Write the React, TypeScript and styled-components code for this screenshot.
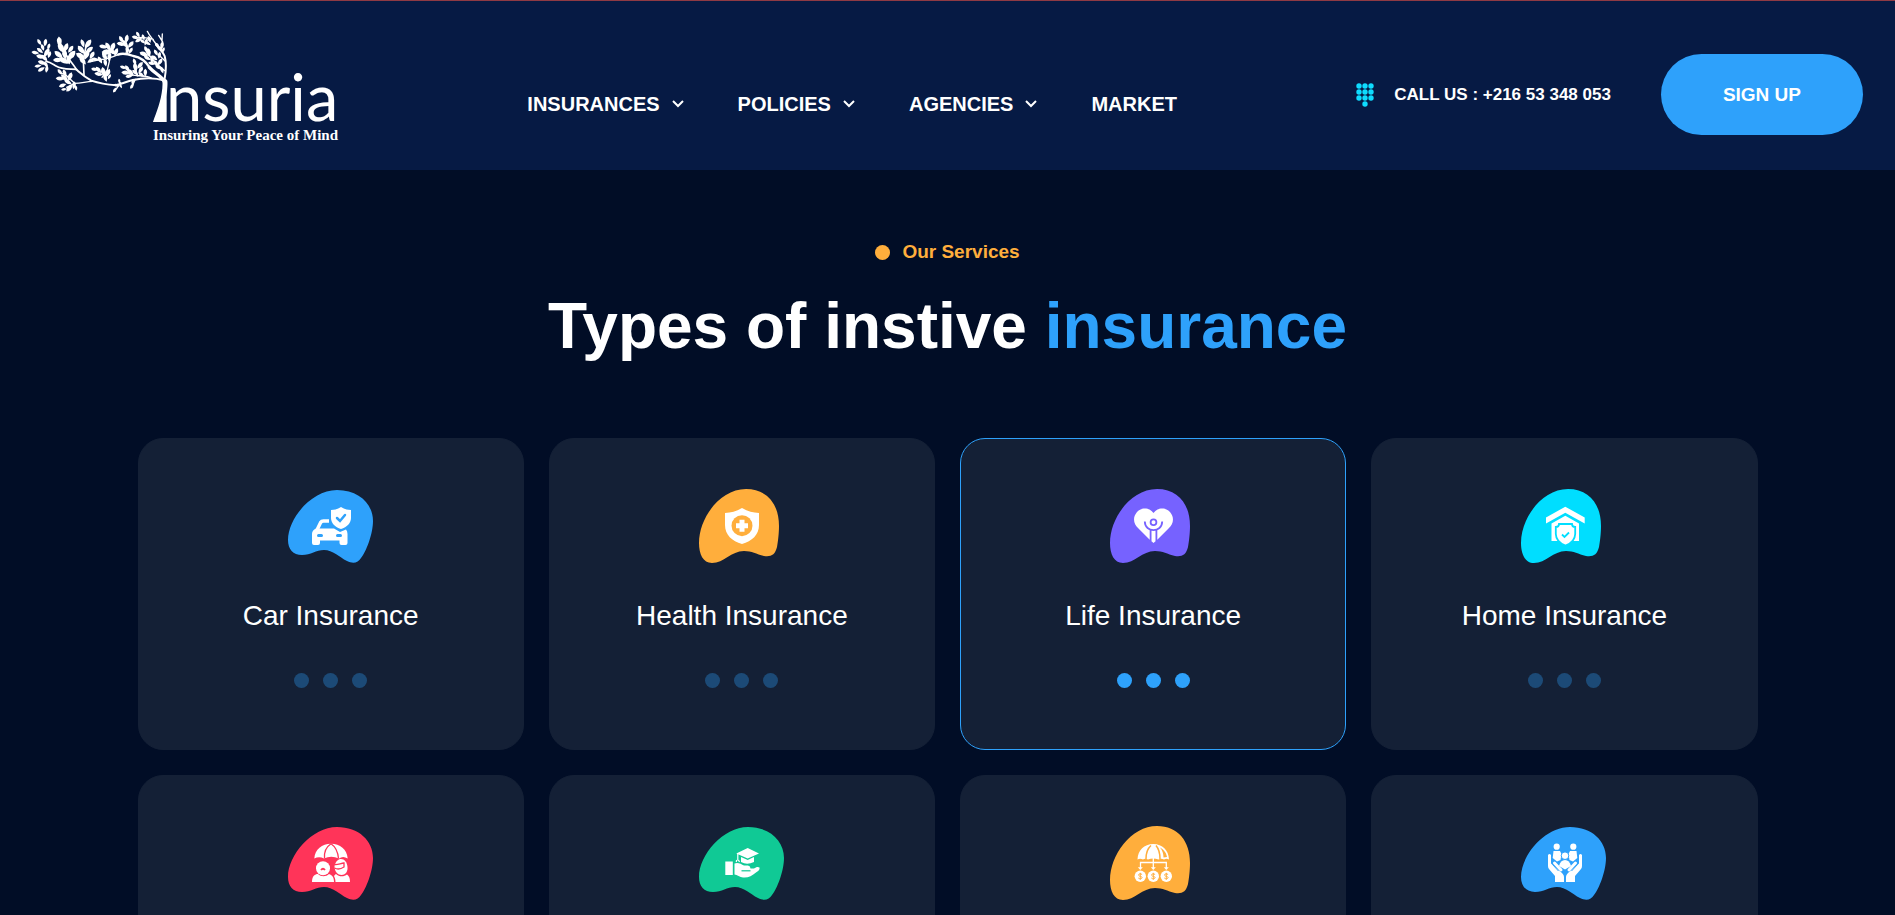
import React from "react";
import styled, { createGlobalStyle } from "styled-components";

const GlobalStyle = createGlobalStyle`
  *, *::before, *::after { box-sizing: border-box; }
  body {
    margin: 0;
    background: #010d26;
    color: #fff;
    font-family: "Liberation Sans", Arial, sans-serif;
  }
`;

const Page = styled.div`
  height: 100vh;
  overflow: hidden;
`;

const Header = styled.header`
  display: grid;
  grid-template-columns: auto 1fr auto;
  align-items: center;
  min-height: 170px;
  padding: 0 32px;
  border-top: 1px solid #8f3a44;
  background: #061a44;
`;

const LogoLink = styled.a`
  display: block;
  color: #fff;
`;

const LogoSvg = styled.svg`
  display: block;
  width: 304px;
  height: 119px;
  overflow: visible;
`;

const LogoName = styled.text`
  font: 400 65px Lato, "Liberation Sans", sans-serif;
`;

const LogoTagline = styled.text`
  font: 700 15px "Liberation Serif", "Times New Roman", serif;
`;

const Nav = styled.nav`
  display: flex;
  justify-content: center;
  gap: 54px;
  padding: 12px 0 0 12px;
  margin-top: 24px;
`;

const NavLink = styled.a`
  display: flex;
  align-items: center;
  gap: 12px;
  color: #fff;
  font-size: 20px;
  font-weight: 700;
  line-height: 24px;
  text-decoration: none;
`;

const Chevron = styled.svg`
  width: 12px;
  height: 24px;
`;

const Actions = styled.div`
  display: flex;
  align-items: center;
  gap: 50px;
  margin-top: 18px;
`;

const PhoneLink = styled.a`
  display: flex;
  align-items: center;
  gap: 20px;
  color: #fff;
  font-size: 17px;
  font-weight: 700;
  line-height: 24px;
  text-decoration: none;
`;

const SignUp = styled.button`
  height: 81px;
  padding: 0 62px;
  border: 0;
  border-radius: 41px;
  background: #2ea1fb;
  color: #fff;
  font: 700 19px/24px "Liberation Sans", Arial, sans-serif;
  cursor: pointer;
`;

const Services = styled.main`
  max-width: 1620px;
  margin: 0 auto;
  padding: 68px 0 60px;
`;

const Label = styled.p`
  display: flex;
  align-items: center;
  justify-content: center;
  gap: 12px;
  margin: 0;
  color: #ffae3c;
  font-size: 19px;
  font-weight: 700;
  line-height: 28px;
`;

const Title = styled.h1`
  margin: 22px 0 74px;
  font-size: 64px;
  font-weight: 700;
  line-height: 76px;
  text-align: center;
`;

const Accent = styled.span`
  color: #2ea1fb;
`;

const Grid = styled.div`
  display: grid;
  grid-template-columns: repeat(4, 1fr);
  gap: 25px;
`;

const Card = styled.article<{ $active?: boolean }>`
  display: flex;
  flex-direction: column;
  align-items: center;
  min-height: 312px;
  padding: 49px 20px;
  border: 1px solid ${(p) => (p.$active ? "#2ea1fb" : "#142036")};
  border-radius: 25px;
  background: #142036;
`;

const CardIcon = styled.svg`
  width: 88px;
  height: 76px;
`;

const CardTitle = styled.h2`
  margin: 34px 0 39px;
  font-size: 28px;
  font-weight: 400;
  line-height: 36px;
`;

const Dots = styled.div<{ $active?: boolean }>`
  display: flex;
  gap: 14px;
  opacity: ${(p) => (p.$active ? 1 : 0.33)};
`;

const Dot = styled.span<{ $color: string }>`
  width: 15px;
  height: 15px;
  border-radius: 50%;
  background: ${(p) => p.$color};
`;

/* Each leaf: x and y of its centre, direction in degrees, length. */
const leaves: number[][] = [
  [58, 66, 60, 20], [76, 68, 100, 22], [68, 82, 70, 20], [86, 80, 110, 18], [46, 98, 10, 22],
  [60, 92, 40, 22], [80, 98, 120, 28], [62, 110, 10, 26], [74, 114, 50, 24], [88, 104, 110, 20],
  [54, 138, -10, 20], [66, 128, 20, 24], [64, 148, -30, 22], [80, 148, 100, 20], [78, 134, 60, 20],
  [118, 66, 85, 30], [124, 84, 60, 34], [138, 82, 110, 26], [152, 88, 125, 24], [116, 104, 40, 30],
  [134, 102, 80, 30], [154, 106, 130, 34], [114, 120, 0, 28], [132, 122, 30, 32], [146, 120, 80, 26],
  [188, 70, 70, 24], [204, 72, 125, 30], [184, 90, 50, 30], [208, 90, 140, 26], [182, 108, 30, 30],
  [200, 104, 110, 30], [188, 122, 50, 28], [216, 106, 120, 24], [212, 122, 150, 22],
  [226, 118, 10, 22], [240, 120, 60, 22], [254, 108, 60, 26], [268, 110, 100, 24], [256, 128, 80, 22],
  [250, 80, 10, 24], [264, 80, 60, 26], [278, 82, 110, 28], [262, 96, 0, 32], [288, 96, 110, 24], [276, 94, 40, 28],
  [304, 58, 60, 22], [320, 56, 100, 24], [304, 72, 10, 26], [316, 72, 60, 26], [332, 74, 130, 24], [322, 90, 80, 22], [332, 92, 120, 20],
  [346, 52, 10, 20], [354, 44, 60, 18], [356, 60, -30, 22], [370, 52, 70, 18], [378, 66, 110, 20], [368, 64, 40, 18], [388, 58, 70, 20], [384, 70, 30, 18],
  [378, 88, 70, 20], [372, 102, 20, 26], [386, 98, 80, 26], [382, 114, 30, 22], [396, 118, 90, 22],
  [408, 98, 60, 20], [418, 106, 100, 20], [396, 130, 10, 22], [408, 130, 50, 22], [420, 126, 120, 22], [416, 142, 30, 22], [426, 150, 70, 20], [404, 114, 40, 20],
  [412, 76, 50, 18], [426, 76, 100, 22], [420, 86, 40, 22], [430, 90, 110, 16],
  [310, 142, 20, 20], [322, 146, 60, 22], [318, 158, 5, 26], [332, 158, 50, 26], [344, 126, 70, 20], [346, 142, 80, 26], [360, 136, 130, 24], [362, 150, 120, 22], [346, 158, 40, 22], [328, 168, -10, 22], [376, 158, 90, 22], [364, 164, 40, 20],
  [224, 148, 10, 20], [236, 150, 50, 24], [236, 162, 10, 24], [250, 156, 80, 28], [262, 160, 120, 28], [256, 174, 70, 22], [268, 170, 120, 16],
  [120, 156, 50, 20], [134, 160, 70, 22], [120, 176, 5, 24], [134, 174, 40, 26], [150, 170, 110, 26], [128, 196, -20, 22], [144, 186, 30, 24], [148, 204, -50, 26], [162, 196, 100, 22], [168, 204, 80, 16], [132, 208, -10, 16],
  [298, 184, 80, 14], [290, 196, 20, 16], [284, 210, -60, 16], [302, 198, 60, 14], [338, 186, 100, 16], [336, 198, -60, 18],
];

function Leaf({ x, y, angle, len }: { x: number; y: number; angle: number; len: number }) {
  const h = len * 0.54;
  const w = len * 0.33;
  return (
    <path
      d={`M${-h} 0Q${-h / 4} ${-w * 1.5} ${h} 0Q${-h / 4} ${w * 1.5} ${-h} 0Z`}
      transform={`translate(${x} ${y}) rotate(${angle})`}
    />
  );
}

function Logo() {
  return (
    <LogoSvg viewBox="0 0 304 119" fill="currentColor" role="img" aria-label="Insuria">
      <g transform="translate(-12 -6) scale(.3333)">
        {leaves.map(([x, y, angle, len]) => (
          <Leaf key={`${x}-${y}`} x={x} y={y} angle={angle} len={len} />
        ))}
        <path d="M416 176C430 180 428 188 427 205C423 245 410 275 399 306H440V240C440 215 444 195 442 182C438 174 424 172 416 176Z" />
        <g fill="none" stroke="currentColor" strokeLinecap="round">
          <path strokeWidth="10" d="M436 186C424 168 404 160 388 142" />
          <path strokeWidth="7" d="M390 144C378 124 364 112 340 108C324 102 308 98 294 104" />
          <path strokeWidth="4" d="M296 103C276 112 262 118 240 119L216 124M270 116L262 150L246 172M318 102L322 78" />
          <path strokeWidth="6" d="M434 182C404 172 366 174 338 180C320 184 306 192 286 196" />
          <path strokeWidth="6" d="M288 196C262 194 232 188 214 182C192 170 180 158 168 148" />
          <path strokeWidth="5" d="M170 148C150 146 126 150 108 138C98 132 92 126 78 124M192 164L190 118L198 80M168 146C156 128 142 112 128 90" />
          <path strokeWidth="4" d="M218 184C198 184 186 190 164 190L136 164L124 160M164 190L140 202M302 188L284 214M346 178L336 200M394 174C374 164 352 170 334 164M352 168L344 134" />
          <path strokeWidth="6" d="M434 176C438 154 440 130 434 108C428 92 416 86 408 74" />
          <path strokeWidth="4" d="M410 76C402 60 390 52 382 34M400 58L370 52L348 54M424 90L428 66L416 46M426 64L427 42M434 152L404 126L380 96M436 124L416 104" />
        </g>
      </g>
      <LogoName x="134" y="95">nsuria</LogoName>
      <LogoTagline x="121" y="114">Insuring Your Peace of Mind</LogoTagline>
    </LogoSvg>
  );
}

function Keypad() {
  return (
    <svg width="18" height="24" viewBox="0 0 18 24" fill="#0edcff" aria-hidden="true">
      {[3, 9, 15].map((y) => [3, 9, 15].map((x) => <circle key={`${x}-${y}`} cx={x} cy={y} r="2.7" />))}
      <circle cx="9" cy="21" r="2.7" />
    </svg>
  );
}

const BLOB_LOW =
  "M1 52C1 30 25 2 50 2C72 2 86 16 86 33C86 46 79 64 74 70C71 75 66 76 60 73C52 69 46 62 37 62C29 62 24 67 15 67C6 67 1 61 1 52Z";
const BLOB_TALL =
  "M1 55C1 30 22 1 48 1C69 1 81 16 81 38C81 45 80 54 79 59C77 67 73 69 66 68C58 66 54 63 46 63C33 63 26 75 14 75C5 75 1 66 1 55Z";

type Glyph = (props: { bg: string }) => React.ReactElement;

const CarGlyph: Glyph = ({ bg }) => (
  <>
    <path d="M30 42L33.600 34.500Q34.500 33 36.500 33H42" fill="none" stroke="#fff" strokeWidth="3.500" />
    <path d="M29 40.500H47L53 44L59 41.500Q60.500 43 60.500 46V55Q60.500 57 58.500 57H54.500Q52.500 57 52.500 55V52.500H33V55Q33 57 31 57H27Q25 57 25 55V46Q25 42 29 40.500Z" />
    <path d="M54 19C51 21 48 22 44 22V30C44 35 48 39 54 41C60 39 64 35 64 30V22C60 22 57 21 54 19Z" />
    <path d="M50 30L53 33L58 27" fill="none" stroke={bg} strokeWidth="2.500" strokeLinecap="round" />
    <path d="M31.500 47.500H34.500M50.500 47.500H53.500" stroke={bg} strokeWidth="3" strokeLinecap="round" />
  </>
);

const HealthGlyph: Glyph = ({ bg }) => (
  <>
    <path d="M44 20C38 23.500 33 24.500 27 25V37C27 47 34 53 44 56C54 53 61 47 61 37V25C55 24.500 50 23.500 44 20Z" />
    <circle cx="44" cy="37.700" r="10.500" fill={bg} />
    <path d="M41.500 31.700H46.500V35.200H50V40.200H46.500V43.700H41.500V40.200H38V35.200H41.500Z" />
  </>
);

const LifeGlyph: Glyph = ({ bg }) => (
  <>
    <path d="M44.500 25C40 19 32 19.500 28 24C23 30 25 36 29 40L40 51L44.500 55L49 51L60 40C64 36 66 30 61 24C57 19.500 49 19 44.500 25Z" />
    <g fill="none" stroke={bg} strokeWidth="1.800">
      <circle cx="44.500" cy="34.300" r="2.900" />
      <path d="M35.800 33.500C36 45 53 45 53.200 33.500M41.600 41.500V53M47.400 41.500V53" />
    </g>
  </>
);

const HomeGlyph: Glyph = ({ bg }) => (
  <>
    <path d="M45.300 18.700L26 29.500V35.500L45.300 24.700L64.700 35.500V29.500Z" />
    <path d="M45.300 27.700L31.500 35.500V53H59V35.500Z" />
    <path
      d="M39 36H52Q52 39 55.200 39V46C55 52 51 55.500 45.500 57.500C40 55.500 36 52 35.800 46V39Q39 39 39 36Z"
      stroke={bg}
      strokeWidth="1.800"
    />
    <path d="M42 46.500L44.500 49L49 44.500" fill="none" stroke={bg} strokeWidth="1.800" />
  </>
);

const FamilyGlyph: Glyph = ({ bg }) => (
  <>
    <path d="M27.300 33.500C28 24 35 19 44 18.700C53 19 60 24 60.700 33.500Q56 30.500 52 33.500Q44 30 37 33.500Q32 31 27.300 33.500Z" />
    <path d="M44 18.700C39 22 37 28 37.500 33.500M44 18.700C49 22 51 28 51.500 33.500" fill="none" stroke={bg} strokeWidth="1.300" />
    <path d="M25 57C25 51 28 49 31 49C34 52 39 52 42 49C45 50 47 52 47 57ZM48.500 57C48.500 54 47.500 52 47 51Q48 49.500 49 49C52 52 57 52 60 49.500C62 51 63 53 63 57Z" />
    <circle cx="36" cy="43.300" r="7" />
    <path d="M34 45Q36 42.500 38 45" fill="none" stroke={bg} strokeWidth="1.800" />
    <path d="M47.500 41C49 36 51 34 54 34C57.500 34 60 37 60.500 42C61 47 58 50 54.500 50C51 50 47.500 47 47.500 41Z" />
    <path d="M47.500 39.500C51 40 54 38 57 38V42C54 44 51 45 47.500 43" fill="none" stroke={bg} strokeWidth="1.300" />
  </>
);

const EducationGlyph: Glyph = ({ bg }) => (
  <>
    <path d="M49.700 23L61 28.500L49.700 33.500L38.300 28.500ZM43 32L49.700 35L56 32V37Q49 40.500 43 37Z" />
    <path d="M39.800 28.500V35.500M38.700 35L38.200 37M40.500 35L41.500 37" fill="none" stroke="#fff" strokeWidth="1.200" />
    <rect x="27.300" y="36.500" width="7.500" height="13.500" />
    <path d="M36.500 38.500C40 37 43 39 46 40.500H50Q52.500 41 52.500 43.500H56C58 42 60 41.500 61.500 42.500C62 45 60 46 58 47.500C54 51 50 53 45 52.500C42 52 39 50 36.500 49.500Z" />
    <path d="M43.500 45.800H52.500" stroke={bg} strokeWidth="1.200" />
  </>
);

const InvestGlyph: Glyph = ({ bg }) => (
  <>
    <path d="M28.500 34.500C29 25 35 19.300 44.300 19C53.500 19.300 59.500 25 60 34.500Q57.500 33 55 34.500Q52 33 49.500 34.500Q44 32.500 39 34.500Q36 33 34 34.500Q31 33 28.500 34.500Z" />
    <path d="M42 20.500C38 24 37 28 37 34M47 20.500C50 24 51 28 51 34" fill="none" stroke={bg} strokeWidth="1.500" />
    <path d="M51 22.500C55.500 25 57.500 28.500 58 32L54.500 32.500C54.500 28.500 53.500 25.500 51 22.500Z" fill={bg} />
    <path d="M44.300 30V43M31.500 43V37.500H57.300V43" fill="none" stroke="#fff" strokeWidth="1.300" />
    {[31.3, 44.3, 57.3].map((x) => (
      <g key={x} transform={`translate(${x} 51.300)`}>
        <path d="M-2.500 -9H2.500L0 -6.300Z" />
        <circle r="5.700" />
        <path d="M1.800 -1.800C.5 -3 -2 -2.500 -1.700 -1C-1.300 .3 1.700 -.2 1.800 1.200C1.800 2.800 -1 2.800 -2 1.700M0 -3.500V3.500" fill="none" stroke={bg} strokeWidth="1" />
      </g>
    ))}
  </>
);

const CareGlyph: Glyph = ({ bg }) => (
  <>
    <circle cx="36.700" cy="21.700" r="3.100" />
    <circle cx="53.300" cy="21.700" r="3.100" />
    <path d="M33.500 26H40L41.500 29L40.500 35L37 36.500L32.700 33ZM56.500 26H50L48.500 29L49.500 35L53 36.500L57.300 33Z" />
    <path d="M39 41C40 37 42 35 45 35C48 35 50 37 51 41L45 44.500Z" />
    <circle cx="45" cy="30.700" r="3.800" stroke={bg} strokeWidth="1" />
    <path d="M28 30Q29.500 28 31 30V38.500L39.500 46Q44 49 44 52V57H35V51L29 44Q28 43 28 41ZM62 30Q60.500 28 59 30V38.500L50.500 46Q46 49 46 52V57H55V51L61 44Q62 43 62 41Z" />
    <path d="M34.500 38L41 45M55.500 38L49 45" stroke="#fff" strokeWidth="3" strokeLinecap="round" />
    <path d="M32.500 39.500L38.500 46M57.500 39.500L51.500 46" stroke={bg} strokeWidth="1" />
  </>
);

interface Service {
  name?: string;
  color: string;
  blob: string;
  glyph: Glyph;
  active?: boolean;
}

const services: Service[] = [
  { name: "Car Insurance", color: "#2ea1fb", blob: BLOB_LOW, glyph: CarGlyph },
  { name: "Health Insurance", color: "#ffae3c", blob: BLOB_TALL, glyph: HealthGlyph },
  { name: "Life Insurance", color: "#7662ff", blob: BLOB_TALL, glyph: LifeGlyph, active: true },
  { name: "Home Insurance", color: "#00deff", blob: BLOB_TALL, glyph: HomeGlyph },
  { color: "#ff3459", blob: BLOB_LOW, glyph: FamilyGlyph },
  { color: "#10c995", blob: BLOB_LOW, glyph: EducationGlyph },
  { color: "#ffae3c", blob: BLOB_TALL, glyph: InvestGlyph },
  { color: "#2ea1fb", blob: BLOB_LOW, glyph: CareGlyph },
];

function ServiceCard({ name, color, blob, glyph: GlyphShape, active }: Service) {
  return (
    <Card $active={active}>
      <CardIcon viewBox="0 0 88 76" fill="#fff" aria-hidden="true">
        <path d={blob} fill={color} />
        <GlyphShape bg={color} />
      </CardIcon>
      {name && (
        <>
          <CardTitle>{name}</CardTitle>
          <Dots $active={active}>
            <Dot $color="#2ea1fb" />
            <Dot $color="#2ea1fb" />
            <Dot $color="#2ea1fb" />
          </Dots>
        </>
      )}
    </Card>
  );
}

const menu = [
  { label: "INSURANCES", open: true },
  { label: "POLICIES", open: true },
  { label: "AGENCIES", open: true },
  { label: "MARKET", open: false },
];

export default function App() {
  return (
    <Page>
      <GlobalStyle />
      <Header>
        <LogoLink href="#">
          <Logo />
        </LogoLink>
        <Nav>
          {menu.map((item) => (
            <NavLink key={item.label} href="#">
              {item.label}
              {item.open && (
                <Chevron viewBox="0 0 12 24" fill="none" stroke="#fff" strokeWidth="2" aria-hidden="true">
                  <path d="M1 9L6 14L11 9" />
                </Chevron>
              )}
            </NavLink>
          ))}
        </Nav>
        <Actions>
          <PhoneLink href="tel:+21653348053">
            <Keypad />
            CALL US : +216 53 348 053
          </PhoneLink>
          <SignUp type="button">SIGN UP</SignUp>
        </Actions>
      </Header>
      <Services>
        <Label>
          <Dot $color="#ffae3c" />
          Our Services
        </Label>
        <Title>
          Types of instive <Accent>insurance</Accent>
        </Title>
        <Grid>
          {services.map((service, i) => (
            <ServiceCard key={i} {...service} />
          ))}
        </Grid>
      </Services>
    </Page>
  );
}
